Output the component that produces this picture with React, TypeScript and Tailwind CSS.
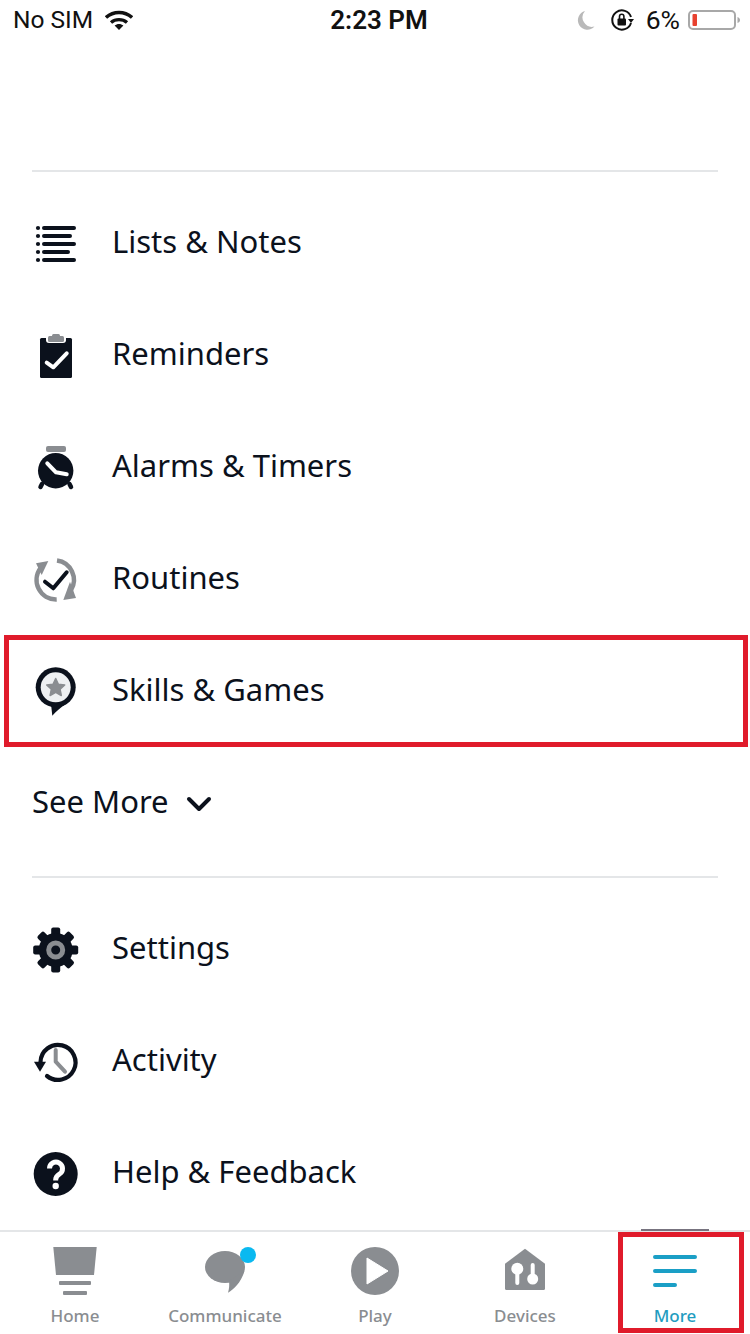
import type { ReactNode } from "react";

const INK = "#0b111c";
const GREY = "#8a8d91";

function Row({ icon, label, boxed }: { icon: ReactNode; label: string; boxed?: boolean }) {
  return (
    <div className="relative flex h-[112px] items-center gap-[32px] pl-8">
      <svg width="48" height="48" viewBox="0 0 48 48" className="shrink-0 overflow-visible">{icon}</svg>
      <span className="mb-[2px] text-[31px] leading-none text-[#0b111c]">{label}</span>
      {boxed && <div className="absolute left-1 right-[2px] top-[1px] bottom-[-1px] border-[5px] border-[#e01b2b]" />}
    </div>
  );
}

function Tab({ icon, label, active }: { icon: ReactNode; label: string; active?: boolean }) {
  return (
    <div className="relative flex w-[150px] flex-col items-center pt-[15px]">
      <svg width="50" height="50" viewBox="0 0 50 50" className="overflow-visible">{icon}</svg>
      <span className={`mt-[8px] text-[17px] font-medium leading-[22px] ${active ? "text-[#1f9cc0]" : "text-[#8a8d91]"}`}>{label}</span>
      {active && <div className="absolute left-[18px] right-[6px] top-0 bottom-[1px] border-[5px] border-[#e01b2b]" />}
    </div>
  );
}

const gearTeeth = [0, 45, 90, 135, 180, 225, 270, 315];

export default function App() {
  return (
    <div className="flex h-[1334px] w-[750px] flex-col overflow-hidden bg-white font-['Noto_Sans',sans-serif]">
      <div className="flex h-[40px] items-center justify-between pl-[13px] pr-[9px] font-['Roboto',sans-serif] text-[24.5px] text-[#111]">
        <div className="flex w-[250px] items-center gap-[12px]">
          <span>No SIM</span>
          <svg width="28" height="20" viewBox="0 0 28 20">
            <path d="M1 7.500C8.500 .8 19.500 .8 27 7.500" fill="none" stroke="#111" strokeWidth="3.400" />
            <path d="M6 12.500C10.500 8.700 17.500 8.700 22 12.500" fill="none" stroke="#111" strokeWidth="3.400" />
            <path d="M9.600 15.600C12.200 13.400 15.800 13.400 18.400 15.600L14 20Z" fill="#111" />
          </svg>
        </div>
        <span className="ml-[4px] text-[26px] font-semibold">2:23 PM</span>
        <div className="flex w-[250px] items-center justify-end gap-[8px]">
          <svg width="20" height="20" viewBox="0 0 20 20" className="mr-[6px]">
            <path d="M9 1A9.500 9.500 0 0 0 18.500 16.500 9.500 9.500 0 1 1 9 1Z" fill="#b9b9b9" />
          </svg>
          <svg width="24" height="24" viewBox="0 0 24 24" className="mr-[4px]">
            <path d="M21 9A9.600 9.600 0 1 0 21 15" fill="none" stroke="#111" strokeWidth="2" />
            <path d="M18 11h6l-3 4Z" fill="#111" />
            <rect x="7.500" y="10.500" width="8.500" height="7" rx="1" fill="#111" />
            <path d="M9.500 11V8.500a2.200 2.200 0 0 1 4.400 0V11" fill="none" stroke="#111" strokeWidth="1.600" />
          </svg>
          <span className="text-[26.5px]">6%</span>
          <svg width="53" height="22" viewBox="0 0 53 22">
            <rect x="1" y="2" width="46" height="18" rx="4" fill="none" stroke="#a8a8a8" strokeWidth="2" />
            <rect x="4.500" y="5" width="4.500" height="12" rx="1" fill="#e8412f" />
            <path d="M49.500 8c1.500.5 2.500 1.500 2.500 3s-1 2.500-2.500 3Z" fill="#a8a8a8" />
          </svg>
        </div>
      </div>

      <div className="mx-8 mt-[130px] h-[2px] bg-[#e4e6e8]" />
      <div className="mt-[14px]">
        <Row
          label="Lists & Notes"
          icon={
            <g>
              {[10, 18, 26, 34, 42].map((y) => <circle key={y} cx="6" cy={y} r="2.100" fill={INK} />)}
              <g stroke={INK} strokeWidth="4" strokeLinecap="round">
                <path d="M12 10h30M12 18h26M12 26h30M12 34h24M12 42h30" />
              </g>
            </g>
          }
        />
        <Row
          label="Reminders"
          icon={
            <g>
              <rect x="8" y="8" width="32" height="40" rx="1.500" fill={INK} />
              <rect x="14" y="3" width="20" height="10" rx="3" fill="#fff" />
              <rect x="16" y="6" width="16" height="6" rx="1.500" fill={GREY} />
              <rect x="20" y="4" width="8" height="4" rx="1.500" fill={GREY} />
              <path d="M14.700 32.700l6.600 4.600 13.400-14" fill="none" stroke="#fff" strokeWidth="4" strokeLinecap="round" strokeLinejoin="round" />
            </g>
          }
        />
        <Row
          label="Alarms & Timers"
          icon={
            <g>
              <rect x="14" y="4" width="20" height="6" rx="2" fill={GREY} />
              <circle cx="23.700" cy="28.700" r="17.700" fill={INK} />
              <path d="M10 42l-1.500 3M37.500 42l1.500 3" stroke={INK} strokeWidth="4.500" strokeLinecap="round" />
              <path d="M15.300 21.300l8.700 9 10.700 2" fill="none" stroke="#fff" strokeWidth="4" strokeLinecap="round" strokeLinejoin="round" />
            </g>
          }
        />
        <Row
          label="Routines"
          icon={
            <g>
              <path d="M25 6.500A19.500 19.500 0 0 1 39 36" fill="none" stroke={GREY} strokeWidth="4.500" />
              <path d="M31.300 46L44 44 38 27.700Z" fill={GREY} />
              <path d="M24.700 45.500A19.500 19.500 0 0 1 8.700 14" fill="none" stroke={GREY} strokeWidth="4.500" />
              <path d="M4 9.300L16.300 7 9.700 21Z" fill={GREY} />
              <path d="M13 27.700l8.300 6.600 13.400-16" fill="none" stroke={INK} strokeWidth="4" strokeLinecap="round" strokeLinejoin="round" />
            </g>
          }
        />
        <Row
          boxed
          label="Skills & Games"
          icon={
            <g>
              <circle cx="23.700" cy="21.300" r="20" fill={INK} />
              <path d="M19 38L20.300 49.700C24 45.500 29 41 34 38Z" fill={INK} />
              <circle cx="23.700" cy="21.300" r="15" fill="#eef0f2" />
              <path d="M23.700 12.500l2.700 5.700 6.300.8-4.600 4.300 1.200 6.200-5.600-3.100-5.600 3.100 1.200-6.200-4.600-4.300 6.300-.8Z" fill={GREY} stroke={GREY} strokeWidth="1.500" strokeLinejoin="round" />
            </g>
          }
        />
        <div className="flex h-[112px] items-center gap-[19px] pl-8">
          <span className="mb-[2px] text-[31px] leading-none text-[#0b111c]">See More</span>
          <svg width="26" height="16" viewBox="0 0 26 16" className="ml-[-2px] mt-[3px]">
            <path d="M3 3l10 10L23 3" fill="none" stroke={INK} strokeWidth="4" strokeLinecap="round" strokeLinejoin="round" />
          </svg>
        </div>
      </div>

      <div className="mx-8 mt-[18px] h-[2px] bg-[#e4e6e8]" />
      <div className="mt-[14px]">
        <Row
          label="Settings"
          icon={
            <g>
              {gearTeeth.map((a) => <rect key={a} x="19.200" y="3.500" width="9" height="10" rx="2" fill={INK} transform={`rotate(${a} 23.700 26)`} />)}
              <circle cx="23.700" cy="26" r="17" fill={INK} />
              <circle cx="23.700" cy="26" r="7" fill="none" stroke={GREY} strokeWidth="5" />
            </g>
          }
        />
        <Row
          label="Activity"
          icon={
            <g>
              <path d="M8.500 26A17.500 17.500 0 1 1 15 40" fill="none" stroke={INK} strokeWidth="4.200" strokeLinecap="round" />
              <path d="M2 25.700h12l-6 10Z" fill={INK} />
              <path d="M23.700 14v11.700l9.300 10" fill="none" stroke={GREY} strokeWidth="4" strokeLinecap="round" strokeLinejoin="round" />
            </g>
          }
        />
        <Row
          label="Help & Feedback"
          icon={
            <g>
              <circle cx="23.700" cy="26" r="22" fill={INK} />
              <path d="M17.500 20.500a6.500 6.500 0 1 1 10 5.500c-2.500 1.700-3.800 3-3.800 5.500v1" fill="none" stroke="#fff" strokeWidth="5" />
              <circle cx="23.700" cy="38" r="3.200" fill="#fff" />
            </g>
          }
        />
      </div>

      <div className="relative mt-[2px] flex flex-1 border-t-[2px] border-[#e4e6e8]">
        <div className="absolute left-[641px] top-[-3px] h-[2px] w-[68px] bg-[#77737f]" />
        <Tab
          label="Home"
          icon={
            <g fill={GREY}>
              <path d="M3.300 0H46.700L44 28H6Z" />
              <rect x="9" y="34" width="32" height="4" rx="1" />
              <rect x="13" y="44" width="24" height="4" rx="1" />
            </g>
          }
        />
        <Tab
          label="Communicate"
          icon={
            <g>
              <ellipse cx="25" cy="20" rx="20" ry="16" fill={GREY} />
              <path d="M29 34c.5 4 .2 8-1 11.700C33 43 41 36 44.500 24Z" fill={GREY} />
              <circle cx="48" cy="8" r="8" fill="#0ab9f0" />
            </g>
          }
        />
        <Tab
          label="Play"
          icon={
            <g>
              <circle cx="25" cy="24" r="24" fill={GREY} />
              <path d="M17 11v26l21-13Z" fill="#fff" stroke="#fff" strokeWidth="1" strokeLinejoin="round" />
            </g>
          }
        />
        <Tab
          label="Devices"
          icon={
            <g>
              <path d="M25 1.700l20 15V41.500a1.500 1.500 0 0 1-1.500 1.500h-37A1.500 1.500 0 0 1 5 41.500V16.700Z" fill={GREY} />
              <circle cx="17.300" cy="21.700" r="6" fill="#fff" />
              <rect x="15.300" y="22" width="4" height="16" rx="2" fill="#fff" />
              <rect x="30.700" y="16" width="4" height="16" rx="2" fill="#fff" />
              <circle cx="32.700" cy="32" r="5.500" fill="#fff" />
            </g>
          }
        />
        <Tab
          active
          label="More"
          icon={
            <g stroke="#1a9fc6" strokeWidth="4" strokeLinecap="round">
              <path d="M5 10h40M5 24h40M5 38h20" />
            </g>
          }
        />
      </div>
    </div>
  );
}
